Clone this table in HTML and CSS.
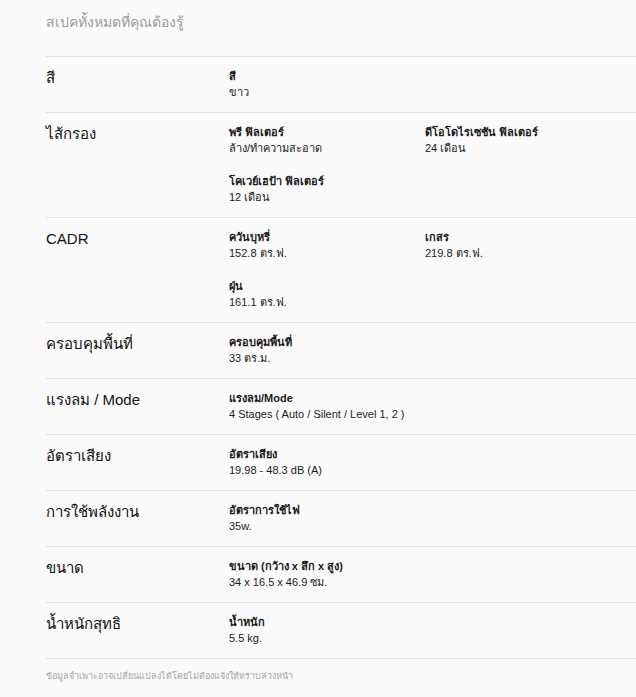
FILE: index.html
```html
<!DOCTYPE html>
<html lang="th">
<head>
<meta charset="utf-8">
<title>สเปคทั้งหมดที่คุณต้องรู้</title>
<link rel="stylesheet" href="styles.css">
</head>
<body>
<div class="page">
  <h2 class="title">สเปคทั้งหมดที่คุณต้องรู้</h2>
  <div class="specs">
    <div class="row">
      <div class="label">สี</div>
      <div class="values">
        <div class="item"><div class="name">สี</div><div class="val">ขาว</div></div>
      </div>
    </div>
    <div class="row">
      <div class="label">ไส้กรอง</div>
      <div class="values">
        <div class="item"><div class="name">พรี ฟิลเตอร์</div><div class="val">ล้าง/ทำความสะอาด</div></div>
        <div class="item"><div class="name">ดีโอโดไรเซชัน ฟิลเตอร์</div><div class="val">24 เดือน</div></div>
        <div class="item"><div class="name">โคเวย์เฮป้า ฟิลเตอร์</div><div class="val">12 เดือน</div></div>
      </div>
    </div>
    <div class="row">
      <div class="label">CADR</div>
      <div class="values">
        <div class="item"><div class="name">ควันบุหรี่</div><div class="val">152.8 ตร.ฟ.</div></div>
        <div class="item"><div class="name">เกสร</div><div class="val">219.8 ตร.ฟ.</div></div>
        <div class="item"><div class="name">ฝุ่น</div><div class="val">161.1 ตร.ฟ.</div></div>
      </div>
    </div>
    <div class="row">
      <div class="label">ครอบคุมพื้นที่</div>
      <div class="values">
        <div class="item"><div class="name">ครอบคุมพื้นที่</div><div class="val">33 ตร.ม.</div></div>
      </div>
    </div>
    <div class="row">
      <div class="label">แรงลม / Mode</div>
      <div class="values">
        <div class="item"><div class="name">แรงลม/Mode</div><div class="val">4 Stages ( Auto / Silent / Level 1, 2 )</div></div>
      </div>
    </div>
    <div class="row">
      <div class="label">อัตราเสียง</div>
      <div class="values">
        <div class="item"><div class="name">อัตราเสียง</div><div class="val">19.98 - 48.3 dB (A)</div></div>
      </div>
    </div>
    <div class="row">
      <div class="label">การใช้พลังงาน</div>
      <div class="values">
        <div class="item"><div class="name">อัตราการใช้ไฟ</div><div class="val">35w.</div></div>
      </div>
    </div>
    <div class="row">
      <div class="label">ขนาด</div>
      <div class="values">
        <div class="item"><div class="name">ขนาด (กว้าง x ลึก x สูง)</div><div class="val">34 x 16.5 x 46.9 ซม.</div></div>
      </div>
    </div>
    <div class="row">
      <div class="label">น้ำหนักสุทธิ</div>
      <div class="values">
        <div class="item"><div class="name">น้ำหนัก</div><div class="val">5.5 kg.</div></div>
      </div>
    </div>
  </div>
  <p class="note">ข้อมูลจำเพาะอาจเปลี่ยนแปลงได้โดยไม่ต้องแจ้งให้ทราบล่วงหน้า</p>
</div>
</body>
</html>
```
FILE: styles.css
```css
html, body {
  margin: 0;
  padding: 0;
  background: #fafafa;
}
body {
  font-family: "Liberation Sans", "Noto Sans", sans-serif;
  color: #111;
}
.page {
  padding: 12px 0 0 46px;
}
.title {
  margin: 0;
  font-size: 14px;
  line-height: 20px;
  font-weight: 400;
  color: #9a9a9a;
  padding-bottom: 24px;
  border-bottom: 1px solid #e2e2e2;
}
.row {
  display: grid;
  grid-template-columns: 183px 1fr;
  padding: 11px 0 12px;
  border-bottom: 1px solid #e2e2e2;
}
.label {
  font-size: 15px;
  line-height: 20px;
  font-weight: 500;
  color: #111;
}
.values {
  display: grid;
  grid-template-columns: 196px 196px;
  row-gap: 17px;
}
.item {
  font-size: 11px;
  line-height: 16px;
  color: #1a1a1a;
}
.name {
  font-weight: 700;
}
.val {
  font-weight: 400;
}
.note {
  margin: 0;
  padding: 11px 0;
  font-size: 9px;
  line-height: 12px;
  color: #a5a5a5;
}
```
